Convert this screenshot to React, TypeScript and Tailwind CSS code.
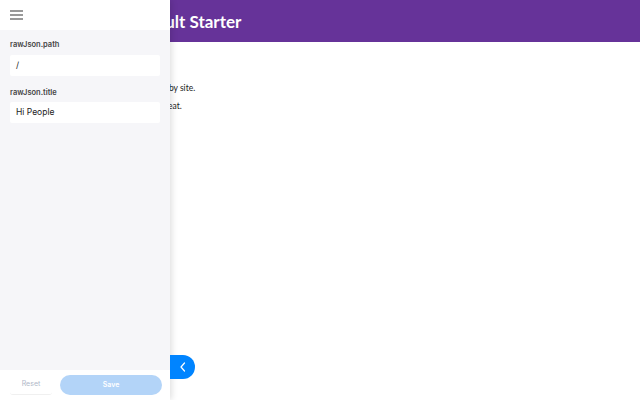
import React from "react";

function Field({ label, value }: { label: string; value: string }) {
	return (
		<div className="flex flex-col">
			<label className="text-[7.5px] font-semibold text-[#444] leading-none mb-[6px]">{label}</label>
			<div className="h-[21px] bg-white rounded-[2px] flex items-center px-[6px] text-[8.5px] text-[#222]">{value}</div>
		</div>
	);
}

export default function App() {
	return (
		<div className="relative w-[640px] h-[400px] overflow-hidden bg-white" style={{ fontFamily: "Lato, sans-serif" }}>
			<header className="bg-[#663399] h-[42px] flex items-center pl-[72px]">
				<h1 className="text-white text-[17px] font-bold leading-none">Gatsby Default Starter</h1>
			</header>
			<main className="pl-[68px] pt-[14px] text-[#222] text-[8.5px] leading-none">
				<h1 className="text-[18px] font-bold mb-[10px]">Hi people</h1>
				<p className="mb-[9px]">Welcome to your new Gatsby site.</p>
				<p>Now go build something great.</p>
			</main>

			<aside className="absolute left-0 top-0 w-[170px] h-[400px] flex flex-col bg-[#f6f6f9] shadow-[2px_0_6px_rgba(0,0,0,0.12)]" style={{ fontFamily: "Inter, sans-serif" }}>
				<div className="h-[30px] bg-white flex items-center px-[10px]">
					<svg width="13" height="10" viewBox="0 0 13 10" fill="none" stroke="#555" strokeWidth="1.2">
						<line x1="0" y1="1" x2="13" y2="1" />
						<line x1="0" y1="5" x2="13" y2="5" />
						<line x1="0" y1="9" x2="13" y2="9" />
					</svg>
				</div>
				<div className="flex-1 px-[10px] pt-[11px] flex flex-col gap-[13px]">
					<Field label="rawJson.path" value="/" />
					<Field label="rawJson.title" value="Hi People" />
				</div>
				<div className="h-[30px] bg-white flex items-center gap-[8px] pl-[10px] pr-[8px]">
					<button className="w-[42px] h-[20px] text-[7px] text-[#b0b8c8] border-b border-[#f0f0f0] rounded-[3px]">Reset</button>
					<button className="flex-1 h-[20px] rounded-full bg-[#b3d4f8] text-white text-[7px] font-semibold">Save</button>
				</div>
			</aside>

			<button className="absolute left-[170px] top-[355px] w-[25px] h-[24px] rounded-r-full bg-[#0084ff] flex items-center justify-center">
				<svg width="8" height="10" viewBox="0 0 8 10" fill="none" stroke="white" strokeWidth="1.2" strokeLinecap="round" strokeLinejoin="round">
					<polyline points="5.5,1 2,5 5.5,9" />
				</svg>
			</button>
		</div>
	);
}
